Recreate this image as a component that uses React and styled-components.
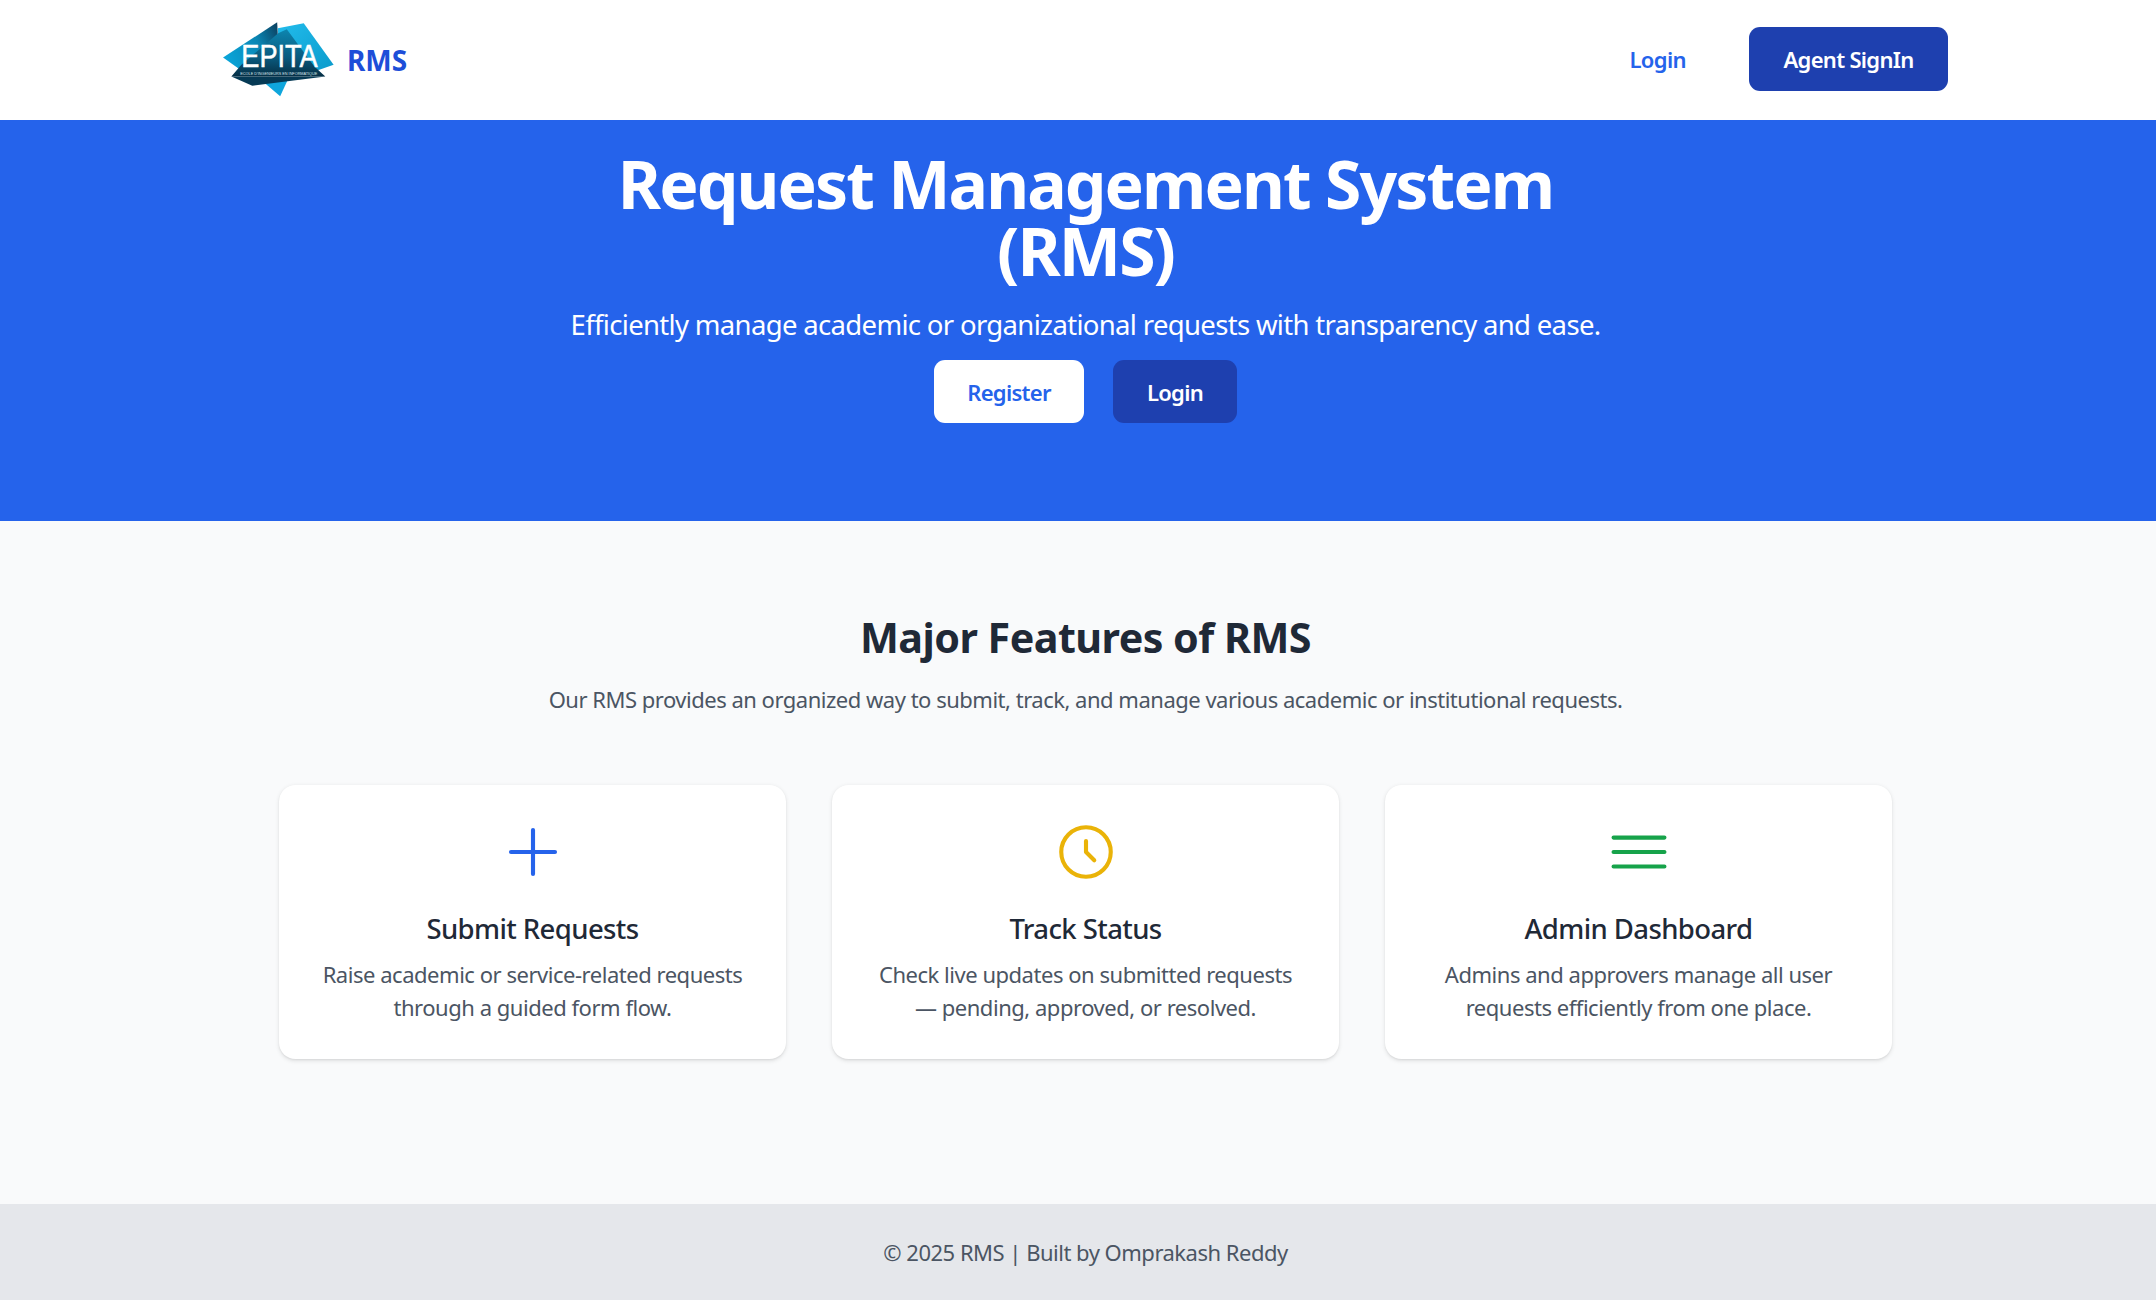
import React from 'react';
import styled, { createGlobalStyle } from 'styled-components';

const GlobalStyle = createGlobalStyle`
	html {
		overflow-x: hidden;
	}
	body {
		margin: 0;
		font-family: 'Noto Sans', 'Open Sans', sans-serif;
		background: #f9fafb;
	}
	#root {
		width: 2171px;
	}
`;

const Nav = styled.nav`
	height: 120px;
	box-sizing: border-box;
	padding-bottom: 2px;
	background: #fff;
	display: flex;
	align-items: center;
	justify-content: center;
`;

const NavInner = styled.div`
	width: 1725px;
	display: flex;
	align-items: center;
	justify-content: space-between;
`;

const Brand = styled.div`
	display: flex;
	align-items: center;
	gap: 11px;
`;

const BrandName = styled.span`
	margin-top: 2px;
	font-size: 28px;
	font-weight: 700;
	color: #1d4ed8;
`;

const NavLinks = styled.div`
	display: flex;
	align-items: center;
	gap: 63px;
`;

const NavLink = styled.a`
	font-size: 22px;
	font-weight: 600;
	color: #2563eb;
	letter-spacing: -0.6px;
`;

const Button = styled.a`
	display: flex;
	align-items: center;
	justify-content: center;
	height: ${(p) => p.$height}px;
	width: ${(p) => p.$width}px;
	border-radius: 11px;
	font-size: 22px;
	font-weight: 600;
	letter-spacing: -0.7px;
	color: ${(p) => (p.$light ? '#2563eb' : '#fff')};
	background: ${(p) => (p.$light ? '#fff' : '#1e40af')};
`;

const Hero = styled.section`
	height: 401px;
	box-sizing: border-box;
	padding-top: 30px;
	background: #2563eb;
	color: #fff;
	text-align: center;
`;

const HeroTitle = styled.h1`
	margin: 0 auto;
	width: 1000px;
	font-size: 66px;
	line-height: 67px;
	font-weight: 700;
	letter-spacing: -1.9px;
`;

const HeroText = styled.p`
	margin: 22px 0 0;
	font-size: 27.5px;
	line-height: 38px;
	letter-spacing: -0.67px;
`;

const HeroActions = styled.div`
	margin-top: 16px;
	display: flex;
	justify-content: center;
	gap: 29px;
`;

const Features = styled.section`
	height: 683px;
	box-sizing: border-box;
	padding-top: 87px;
	background: #f9fafb;
	text-align: center;
`;

const FeaturesTitle = styled.h2`
	margin: 0;
	font-size: 41.25px;
	line-height: 58px;
	font-weight: 700;
	color: #1f2937;
	letter-spacing: -0.54px;
`;

const FeaturesText = styled.p`
	margin: 17px 0 0;
	font-size: 22px;
	line-height: 33px;
	color: #4b5563;
	letter-spacing: -0.49px;
`;

const CardGrid = styled.div`
	width: 1613px;
	margin: 69px auto 0;
	display: grid;
	grid-template-columns: repeat(3, 1fr);
	gap: 46px;
`;

const Card = styled.article`
	height: 274px;
	box-sizing: border-box;
	padding-top: 34px;
	background: #fff;
	border-radius: 16.5px;
	box-shadow: 0 1.4px 4px rgba(0, 0, 0, 0.1), 0 1px 2px rgba(0, 0, 0, 0.06);
`;

const IconWrap = styled.svg`
	display: block;
	margin: 0 auto;
	width: 66px;
	height: 66px;
	fill: none;
	stroke: ${(p) => p.$color};
	stroke-width: 1.5;
	stroke-linecap: round;
	stroke-linejoin: round;
`;

const CardTitle = styled.h3`
	margin: 25px 0 0;
	font-size: 27.5px;
	line-height: 38px;
	font-weight: 500;
	color: #1f2937;
	letter-spacing: -0.6px;
`;

const CardText = styled.p`
	margin: 10px auto 0;
	width: 430px;
	font-size: 22px;
	line-height: 33px;
	color: #4b5563;
	letter-spacing: -0.47px;
`;

const Footer = styled.footer`
	height: 96px;
	display: flex;
	align-items: center;
	justify-content: center;
	background: #e5e7eb;
	font-size: 22px;
	color: #4b5563;
	letter-spacing: -0.5px;
`;

const Logo = () => (
	<svg width="113" height="78" viewBox="70 60 340 235">
		<defs>
			<linearGradient id="left" x1="0" y1="0.6" x2="1" y2="0.2">
				<stop offset="0" stopColor="#0aa4d8" />
				<stop offset="0.6" stopColor="#0a86b4" />
				<stop offset="1" stopColor="#0b4464" />
			</linearGradient>
			<linearGradient id="right" x1="0" y1="0" x2="1" y2="1">
				<stop offset="0" stopColor="#22bcec" />
				<stop offset="1" stopColor="#0a9acb" />
			</linearGradient>
			<linearGradient id="core" x1="0" y1="0" x2="0" y2="1">
				<stop offset="0" stopColor="#0d86b0" />
				<stop offset="0.6" stopColor="#0a5a7e" />
				<stop offset="1" stopColor="#062f45" />
			</linearGradient>
		</defs>
		<polygon points="190,245 242,290 265,240" fill="#0fa6dc" />
		<polygon points="235,85 313,70 403,195 345,215 240,190" fill="url(#right)" />
		<polygon points="70,173 233,67 240,205 125,212" fill="url(#left)" />
		<polygon points="236,100 262,88 345,200 378,230 95,230 125,195" fill="url(#core)" />
		<polygon points="95,230 378,230 158,258" fill="#063a55" />
		<text x="240" y="201" textAnchor="middle" fontFamily="Liberation Sans, sans-serif" fontSize="92" fill="#fff" stroke="#fff" strokeWidth="1.5" textLength="230" lengthAdjust="spacingAndGlyphs">EPITA</text>
		<text x="238" y="225" textAnchor="middle" fontFamily="Liberation Sans, sans-serif" fontSize="12" fill="#d5e4ec" textLength="232" lengthAdjust="spacingAndGlyphs">ECOLE D'INGENIEURS EN INFORMATIQUE</text>
	</svg>
);

const cards = [
	{
		title: 'Submit Requests',
		lines: 'Raise academic or service-related requests through a guided form flow.',
		color: '#2563eb',
		d: 'M12 4v16M4 12h16',
	},
	{
		title: 'Track Status',
		lines: 'Check live updates on submitted requests — pending, approved, or resolved.',
		color: '#eab308',
		d: 'M12 8v4l3 3m6-3a9 9 0 11-18 0 9 9 0 0118 0z',
	},
	{
		title: 'Admin Dashboard',
		lines: 'Admins and approvers manage all user requests efficiently from one place.',
		color: '#16a34a',
		d: 'M2.75 6.75h18.5M2.75 12h18.5m-18.5 5.25h18.5',
	},
];

export default function App() {
	return (
		<React.Fragment>
			<GlobalStyle />
			<Nav>
				<NavInner>
					<Brand>
						<Logo />
						<BrandName>RMS</BrandName>
					</Brand>
					<NavLinks>
						<NavLink>Login</NavLink>
						<Button $width={199} $height={64}>Agent SignIn</Button>
					</NavLinks>
				</NavInner>
			</Nav>
			<Hero>
				<HeroTitle>Request Management System (RMS)</HeroTitle>
				<HeroText>Efficiently manage academic or organizational requests with transparency and ease.</HeroText>
				<HeroActions>
					<Button $light $width={150} $height={63}>Register</Button>
					<Button $width={124} $height={63}>Login</Button>
				</HeroActions>
			</Hero>
			<Features>
				<FeaturesTitle>Major Features of RMS</FeaturesTitle>
				<FeaturesText>Our RMS provides an organized way to submit, track, and manage various academic or institutional requests.</FeaturesText>
				<CardGrid>
					{cards.map((card) => (
						<Card key={card.title}>
							<IconWrap $color={card.color} viewBox="0 0 24 24">
								<path d={card.d} />
							</IconWrap>
							<CardTitle>{card.title}</CardTitle>
							<CardText>{card.lines}</CardText>
						</Card>
					))}
				</CardGrid>
			</Features>
			<Footer>© 2025 RMS | Built by Omprakash Reddy</Footer>
		</React.Fragment>
	);
}
